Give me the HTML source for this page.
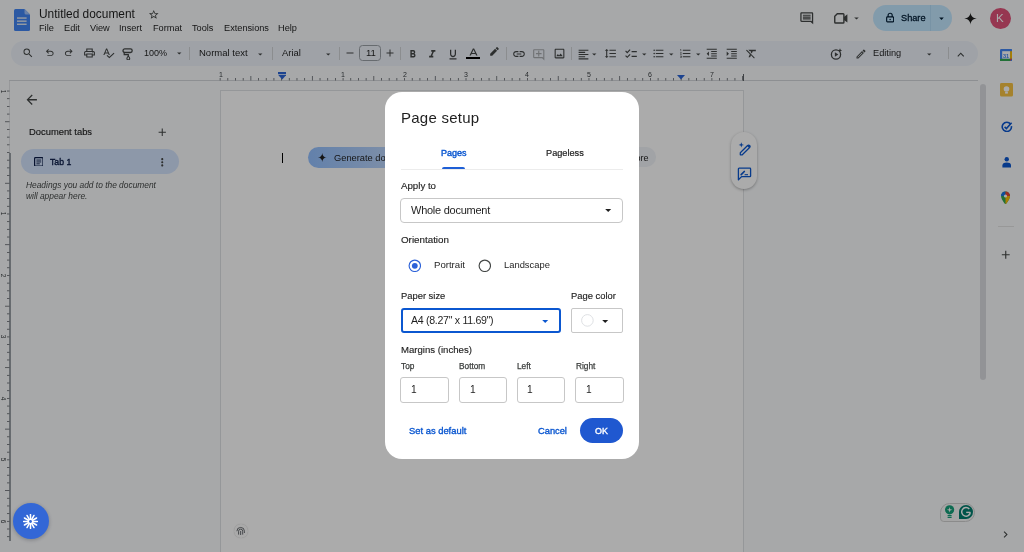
<!DOCTYPE html><html><head><meta charset="utf-8"><style>
html,body{margin:0;padding:0;width:1024px;height:552px;overflow:hidden;background:#f9fbfd;font-family:"Liberation Sans",sans-serif;}
.a{position:absolute;box-sizing:border-box;}
.t{position:absolute;white-space:nowrap;will-change:transform;}
#ov{position:absolute;left:0;top:0;width:1024px;height:552px;background:rgba(0,0,0,0.33);z-index:5}
</style></head><body>
<svg class="a" style="left:14.00px;top:9.00px;width:16.00px;height:22.00px;" viewBox="0 0 16 22"><path d="M0 1.5Q0 0 1.5 0H10.5L16 5.5V20.5Q16 22 14.5 22H1.5Q0 22 0 20.5Z" fill="#4285f4"/><path d="M10.5 0V4Q10.5 5.5 12 5.5H16Z" fill="#a1c2fa"/><rect x="3" y="8.4" width="9.6" height="1.3" fill="#f1f1f1"/><rect x="3" y="11.5" width="9.6" height="1.3" fill="#f1f1f1"/><rect x="3" y="14.6" width="9.6" height="1.3" fill="#f1f1f1"/></svg>
<div class="t" style="left:39.00px;top:4px;font-size:11.9px;line-height:20px;color:#1f1f1f;font-weight:normal;font-style:normal;letter-spacing:0px;">Untitled document</div>
<svg class="a" style="left:147.50px;top:8.50px;width:11.50px;height:11.00px;" viewBox="0 0 24 24" preserveAspectRatio="none"><path fill="#444746" d="M22 9.24l-7.19-.62L12 2 9.19 8.63 2 9.24l5.46 4.73L5.82 21 12 17.27 18.18 21l-1.63-7.03L22 9.24zM12 15.4l-3.76 2.27 1-4.28-3.32-2.88 4.38-.38L12 6.1l1.71 4.04 4.38.38-3.32 2.88 1 4.28L12 15.4z"/></svg>
<div class="t" style="left:39.40px;top:18px;font-size:9.2px;line-height:20px;color:#1f1f1f;font-weight:normal;font-style:normal;letter-spacing:0px;">File</div>
<div class="t" style="left:63.80px;top:18px;font-size:9.2px;line-height:20px;color:#1f1f1f;font-weight:normal;font-style:normal;letter-spacing:0px;">Edit</div>
<div class="t" style="left:89.60px;top:18px;font-size:9.2px;line-height:20px;color:#1f1f1f;font-weight:normal;font-style:normal;letter-spacing:0px;">View</div>
<div class="t" style="left:118.50px;top:18px;font-size:9.2px;line-height:20px;color:#1f1f1f;font-weight:normal;font-style:normal;letter-spacing:0px;">Insert</div>
<div class="t" style="left:152.50px;top:18px;font-size:9.2px;line-height:20px;color:#1f1f1f;font-weight:normal;font-style:normal;letter-spacing:0px;">Format</div>
<div class="t" style="left:192.00px;top:18px;font-size:9.2px;line-height:20px;color:#1f1f1f;font-weight:normal;font-style:normal;letter-spacing:0px;">Tools</div>
<div class="t" style="left:223.60px;top:18px;font-size:9.2px;line-height:20px;color:#1f1f1f;font-weight:normal;font-style:normal;letter-spacing:0px;">Extensions</div>
<div class="t" style="left:277.80px;top:18px;font-size:9.2px;line-height:20px;color:#1f1f1f;font-weight:normal;font-style:normal;letter-spacing:0px;">Help</div>
<svg class="a" style="left:798.50px;top:11.00px;width:15.50px;height:14.50px;" viewBox="0 0 24 24" preserveAspectRatio="none"><path fill="#444746" d="M21.99 4c0-1.1-.89-2-1.99-2H4c-1.1 0-2 .9-2 2v12c0 1.1.9 2 2 2h14l4 4-.01-18zM20 4v13.17L18.83 16H4V4h16zM6 12h12v2H6zm0-3h12v2H6zm0-3h12v2H6z"/></svg>
<svg class="a" style="left:834.00px;top:13.00px;width:14.00px;height:10.80px;" viewBox="0 0 14 10.8"><path d="M3.3 0.75H9.1Q9.9 0.75 9.9 1.55V9.25Q9.9 10.05 9.1 10.05H1.55Q0.75 10.05 0.75 9.25V3.3Z" fill="none" stroke="#444746" stroke-width="1.4"/><path d="M9.9 3.9L13.4 1.3V9.5L9.9 6.9Z" fill="#444746"/></svg>
<svg class="a" style="left:851.00px;top:12.50px;width:11.00px;height:10.50px;" viewBox="0 0 24 24" preserveAspectRatio="none"><path fill="#444746" d="M7 10l5 5 5-5z"/></svg>
<div class="a" style="left:873.00px;top:5.20px;width:79.00px;height:25.70px;background:#c2e7ff;border-radius:13px;"></div>
<div class="a" style="left:930.00px;top:5.20px;width:1.00px;height:25.70px;background:#b3dbf6;"></div>
<svg class="a" style="left:885.50px;top:12.30px;width:8.30px;height:10.50px;" viewBox="0 0 8.3 10.5"><path d="M2.1 4.9V3.3A2.05 2.05 0 0 1 6.2 3.3V4.9" fill="none" stroke="#001d35" stroke-width="1.15"/><rect x="0.65" y="4.9" width="7" height="5" rx="0.8" fill="none" stroke="#001d35" stroke-width="1.15"/><circle cx="4.15" cy="7.4" r="0.75" fill="#001d35"/></svg>
<div class="t" style="left:900.70px;top:8px;font-size:9.2px;line-height:20px;color:#001d35;font-weight:normal;font-style:normal;letter-spacing:0px;-webkit-text-stroke:0.3px #001d35;">Share</div>
<svg class="a" style="left:936.00px;top:12.50px;width:11.00px;height:11.00px;" viewBox="0 0 24 24" preserveAspectRatio="none"><path fill="#001d35" d="M7 10l5 5 5-5z"/></svg>
<svg class="a" style="left:962.50px;top:10.50px;width:15.00px;height:15.00px;" viewBox="0 0 24 24" preserveAspectRatio="none"><path fill="#1f1f1f" d="M12 2C12 7.5 16.5 12 22 12C16.5 12 12 16.5 12 22C12 16.5 7.5 12 2 12C7.5 12 12 7.5 12 2Z"/></svg>
<div class="a" style="left:990.1px;top:8.1px;width:20.8px;height:20.8px;border-radius:50%;background:#e0527a;"></div>
<div class="t" style="left:996.30px;top:8px;font-size:11.5px;line-height:20px;color:#ffffff;font-weight:normal;font-style:normal;letter-spacing:0px;">K</div>
<div class="a" style="left:10.50px;top:40.80px;width:967.10px;height:25.20px;background:#edf2fa;border-radius:12.6px;"></div>
<svg class="a" style="left:22.00px;top:46.80px;width:12.00px;height:12.00px;" viewBox="0 0 24 24" preserveAspectRatio="none"><path fill="#444746" d="M15.5 14h-.79l-.28-.27A6.471 6.471 0 0 0 16 9.5 6.5 6.5 0 1 0 9.5 16c1.61 0 3.09-.59 4.23-1.57l.27.28v.79l5 4.99L20.49 19l-4.99-5zm-6 0C7.01 14 5 11.99 5 9.5S7.01 5 9.5 5 14 7.01 14 9.5 11.99 14 9.5 14z"/></svg>
<svg class="a" style="left:43.50px;top:47.30px;width:11.50px;height:11.50px;" viewBox="0 0 24 24" preserveAspectRatio="none"><path fill="#444746" d="M7 19v-2h7.1q1.575 0 2.738-1T18 13.5 16.838 11 14.1 10H7.8l2.6 2.6L9 14 4 9l5-5 1.4 1.4L7.8 8h6.3q2.425 0 4.163 1.575T20 13.5t-1.737 3.925T14.1 19Z"/></svg>
<svg class="a" style="left:62.50px;top:47.30px;width:11.50px;height:11.50px;" viewBox="0 0 24 24" preserveAspectRatio="none"><path fill="#444746" d="M9.9 19q-2.425 0-4.162-1.575T4 13.5t1.738-3.925T9.9 8h6.3l-2.6-2.6L15 4l5 5-5 5-1.4-1.4 2.6-2.6H9.9q-1.575 0-2.737 1T6 13.5 7.163 16 9.9 17H17v2Z"/></svg>
<svg class="a" style="left:82.50px;top:47.30px;width:13.00px;height:12.00px;" viewBox="0 0 24 24" preserveAspectRatio="none"><path fill="#444746" d="M16 8V5H8v3H6V3h12v5ZM4 10h16H6Zm14 2.5q.425 0 .712-.288.288-.287.288-.712t-.288-.713Q18.425 10.5 18 10.5t-.712.287Q17 11.075 17 11.5t.288.712q.287.288.712.288ZM16 19v-4H8v4Zm2 2H6v-4H2v-6q0-1.275.875-2.137Q3.75 8 5 8h14q1.275 0 2.138.863Q22 9.725 22 11v6h-4Zm2-6v-4q0-.425-.288-.713Q19.425 10 19 10H5q-.425 0-.713.287Q4 10.575 4 11v4h2v-2h12v2Z"/></svg>
<svg class="a" style="left:102.00px;top:47.30px;width:13.00px;height:12.00px;" viewBox="0 0 24 24" preserveAspectRatio="none"><path fill="#444746" d="M12.45 16h2.09L9.43 3H7.57L2.46 16h2.09l1.12-3h5.64l1.14 3zm-6.02-5L8.5 5.48 10.57 11H6.43zm15.16.59l-8.09 8.09L9.83 16l-1.41 1.41 5.09 5.09L23 13l-1.41-1.41z"/></svg>
<svg class="a" style="left:122.00px;top:47.50px;width:11.50px;height:12.00px;" viewBox="0 0 11.5 12"><rect x="1" y="0.9" width="9.2" height="3.6" rx="1.8" fill="none" stroke="#444746" stroke-width="1.3"/><path d="M2.2 4.6V6.6H6.3V8.2" fill="none" stroke="#444746" stroke-width="1.2"/><path d="M6.3 8.2Q4.9 9.6 4.9 10.4A1.4 1.4 0 0 0 7.7 10.4Q7.7 9.6 6.3 8.2Z" fill="none" stroke="#444746" stroke-width="1.1"/></svg>
<div class="t" style="left:144.00px;top:43px;font-size:9.0px;line-height:20px;color:#1f1f1f;font-weight:normal;font-style:normal;letter-spacing:0px;">100%</div>
<svg class="a" style="left:174.00px;top:48.30px;width:10.50px;height:10.50px;" viewBox="0 0 24 24" preserveAspectRatio="none"><path fill="#444746" d="M7 10l5 5 5-5z"/></svg>
<div class="a" style="left:189.00px;top:47.00px;width:1.00px;height:12.50px;background:#d0d3d6;"></div>
<div class="t" style="left:199.20px;top:43px;font-size:9.5px;line-height:20px;color:#1f1f1f;font-weight:normal;font-style:normal;letter-spacing:0px;">Normal text</div>
<svg class="a" style="left:255.00px;top:48.80px;width:10.50px;height:10.50px;" viewBox="0 0 24 24" preserveAspectRatio="none"><path fill="#444746" d="M7 10l5 5 5-5z"/></svg>
<div class="a" style="left:272.20px;top:47.00px;width:1.00px;height:12.50px;background:#d0d3d6;"></div>
<div class="t" style="left:281.90px;top:43px;font-size:9.45px;line-height:20px;color:#1f1f1f;font-weight:normal;font-style:normal;letter-spacing:0px;">Arial</div>
<svg class="a" style="left:322.50px;top:48.80px;width:10.50px;height:10.50px;" viewBox="0 0 24 24" preserveAspectRatio="none"><path fill="#444746" d="M7 10l5 5 5-5z"/></svg>
<div class="a" style="left:339.20px;top:47.00px;width:1.00px;height:12.50px;background:#d0d3d6;"></div>
<svg class="a" style="left:343.50px;top:46.60px;width:12.00px;height:12.00px;" viewBox="0 0 24 24" preserveAspectRatio="none"><path fill="#444746" d="M5 11h14v2H5z"/></svg>
<div class="a" style="left:359.20px;top:45.20px;width:21.50px;height:15.50px;border:1px solid #9aa0a6;border-radius:3.5px;"></div>
<div class="t" style="left:365.60px;top:43px;font-size:9.6px;line-height:20px;color:#1f1f1f;font-weight:normal;font-style:normal;letter-spacing:0px;">11</div>
<svg class="a" style="left:383.50px;top:46.60px;width:12.00px;height:12.00px;" viewBox="0 0 24 24" preserveAspectRatio="none"><path fill="#444746" d="M19 13h-6v6h-2v-6H5v-2h6V5h2v6h6v2z"/></svg>
<div class="a" style="left:400.20px;top:47.00px;width:1.00px;height:12.50px;background:#d0d3d6;"></div>
<svg class="a" style="left:407.00px;top:48.30px;width:11.50px;height:12.50px;" viewBox="0 0 24 24" preserveAspectRatio="none"><path fill="#444746" d="M15.6 10.79c.97-.67 1.65-1.77 1.65-2.79 0-2.26-1.75-4-4-4H7v14h7.04c2.09 0 3.71-1.7 3.71-3.79 0-1.52-.86-2.82-2.15-3.42zM10 6.5h3c.83 0 1.5.67 1.5 1.5s-.67 1.5-1.5 1.5h-3v-3zm3.5 9H10v-3h3.5c.83 0 1.5.67 1.5 1.5s-.67 1.5-1.5 1.5z"/></svg>
<svg class="a" style="left:425.50px;top:48.30px;width:12.50px;height:12.50px;" viewBox="0 0 24 24" preserveAspectRatio="none"><path fill="#444746" d="M10 4v3h2.21l-3.42 8H6v3h8v-3h-2.21l3.42-8H18V4z"/></svg>
<svg class="a" style="left:446.50px;top:47.80px;width:12.00px;height:13.00px;" viewBox="0 0 24 24" preserveAspectRatio="none"><path fill="#444746" d="M12 17c3.31 0 6-2.69 6-6V3h-2.5v8c0 1.93-1.57 3.5-3.5 3.5S8.5 12.93 8.5 11V3H6v8c0 3.31 2.69 6 6 6zm-7 2v2h14v-2H5z"/></svg>
<svg class="a" style="left:465.50px;top:47.30px;width:15.00px;height:12.00px;" viewBox="0 0 24 24" preserveAspectRatio="none"><path fill="#444746" d="M11 3L5.5 17h2.25l1.12-3h6.25l1.12 3h2.25L13 3h-2zm-1.38 9L12 5.67 14.38 12H9.62z"/></svg>
<div class="a" style="left:465.80px;top:57.00px;width:14.30px;height:2.20px;background:#000;"></div>
<svg class="a" style="left:488.00px;top:46.30px;width:13.00px;height:13.00px;" viewBox="0 0 24 24" preserveAspectRatio="none"><path fill="#444746" d="M13.06 5.19l3.75 3.75L7.75 18H4v-3.75l9.06-9.06zm4.82 2.68-3.75-3.75 1.83-1.83c.39-.39 1.02-.39 1.41 0l2.34 2.34c.39.39.39 1.02 0 1.41l-1.83 1.83z"/></svg>
<div class="a" style="left:506.30px;top:47.00px;width:1.00px;height:12.50px;background:#d0d3d6;"></div>
<svg class="a" style="left:512.00px;top:47.10px;width:14.00px;height:14.00px;" viewBox="0 0 24 24" preserveAspectRatio="none"><path fill="#444746" d="M3.9 12c0-1.71 1.39-3.1 3.1-3.1h4V7H7c-2.76 0-5 2.24-5 5s2.24 5 5 5h4v-1.9H7c-1.71 0-3.1-1.39-3.1-3.1zM8 13h8v-2H8v2zm9-6h-4v1.9h4c1.71 0 3.1 1.39 3.1 3.1s-1.39 3.1-3.1 3.1h-4V17h4c2.76 0 5-2.24 5-5s-2.24-5-5-5z"/></svg>
<svg class="a" style="left:532.00px;top:47.80px;width:13.50px;height:13.50px;" viewBox="0 0 24 24" preserveAspectRatio="none"><path fill="#a8abae" d="M22 4c0-1.1-.9-2-2-2H4c-1.1 0-1.99.9-1.99 2L2 16c0 1.1.9 2 2 2h14l4 4-.01-18zM20 17.17 18.83 16H4V4h16v13.17zM13 5h-2v4H7v2h4v4h2v-4h4V9h-4z"/></svg>
<svg class="a" style="left:552.50px;top:46.60px;width:13.00px;height:13.00px;" viewBox="0 0 24 24" preserveAspectRatio="none"><path fill="#444746" d="M19 5v14H5V5h14m0-2H5c-1.1 0-2 .9-2 2v14c0 1.1.9 2 2 2h14c1.1 0 2-.9 2-2V5c0-1.1-.9-2-2-2zm-4.86 8.86-3 3.87L9 13.14 6 17h12l-3.86-5.14z"/></svg>
<div class="a" style="left:571.00px;top:47.00px;width:1.00px;height:12.50px;background:#d0d3d6;"></div>
<svg class="a" style="left:576.50px;top:47.80px;width:13.00px;height:13.00px;" viewBox="0 0 24 24" preserveAspectRatio="none"><path fill="#444746" d="M15 15H3v2h12v-2zm0-8H3v2h12V7zM3 13h18v-2H3v2zm0 8h18v-2H3v2zM3 3v2h18V3H3z"/></svg>
<svg class="a" style="left:589.00px;top:48.80px;width:10.50px;height:10.50px;" viewBox="0 0 24 24" preserveAspectRatio="none"><path fill="#444746" d="M7 10l5 5 5-5z"/></svg>
<svg class="a" style="left:603.50px;top:47.30px;width:13.00px;height:13.00px;" viewBox="0 0 24 24" preserveAspectRatio="none"><path fill="#444746" d="M6 7h2.5L5 3.5 1.5 7H4v10H1.5L5 20.5 8.5 17H6V7zm4-2v2h12V5H10zm0 14h12v-2H10v2zm0-6h12v-2H10v2z"/></svg>
<svg class="a" style="left:624.00px;top:47.30px;width:14.00px;height:14.00px;" viewBox="0 0 24 24" preserveAspectRatio="none"><path fill="#444746" d="M22 7h-9v2h9V7zm0 8h-9v2h9v-2zM5.54 11 2 7.46l1.41-1.41 2.12 2.12 4.24-4.24 1.41 1.41L5.54 11zm0 8L2 15.46l1.41-1.41 2.12 2.12 4.24-4.24 1.41 1.41L5.54 19z"/></svg>
<svg class="a" style="left:638.50px;top:48.80px;width:10.50px;height:10.50px;" viewBox="0 0 24 24" preserveAspectRatio="none"><path fill="#444746" d="M7 10l5 5 5-5z"/></svg>
<svg class="a" style="left:652.00px;top:47.30px;width:13.00px;height:13.00px;" viewBox="0 0 24 24" preserveAspectRatio="none"><path fill="#444746" d="M4 10.5c-.83 0-1.5.67-1.5 1.5s.67 1.5 1.5 1.5 1.5-.67 1.5-1.5-.67-1.5-1.5-1.5zm0-6c-.83 0-1.5.67-1.5 1.5S3.17 7.5 4 7.5 5.5 6.83 5.5 6 4.83 4.5 4 4.5zm0 12c-.83 0-1.5.68-1.5 1.5s.68 1.5 1.5 1.5 1.5-.68 1.5-1.5-.67-1.5-1.5-1.5zM7 19h14v-2H7v2zm0-6h14v-2H7v2zm0-8v2h14V5H7z"/></svg>
<svg class="a" style="left:666.00px;top:48.80px;width:10.50px;height:10.50px;" viewBox="0 0 24 24" preserveAspectRatio="none"><path fill="#444746" d="M7 10l5 5 5-5z"/></svg>
<svg class="a" style="left:678.50px;top:47.30px;width:13.00px;height:13.00px;" viewBox="0 0 24 24" preserveAspectRatio="none"><path fill="#444746" d="M2 17h2v.5H3v1h1v.5H2v1h3v-4H2v1zm1-9h1V4H2v1h1v3zm-1 3h1.8L2 13.1v.9h3v-1H3.2L5 10.9V10H2v1zm5-6v2h14V5H7zm0 14h14v-2H7v2zm0-6h14v-2H7v2z"/></svg>
<svg class="a" style="left:692.50px;top:48.80px;width:10.50px;height:10.50px;" viewBox="0 0 24 24" preserveAspectRatio="none"><path fill="#444746" d="M7 10l5 5 5-5z"/></svg>
<svg class="a" style="left:705.00px;top:47.30px;width:13.50px;height:13.50px;" viewBox="0 0 24 24" preserveAspectRatio="none"><path fill="#444746" d="M11 17h10v-2H11v2zm-8-5 4 4V8l-4 4zm0 9h18v-2H3v2zM3 3v2h18V3H3zm8 6h10V7H11v2zm0 4h10v-2H11v2z"/></svg>
<svg class="a" style="left:725.00px;top:47.30px;width:13.50px;height:13.50px;" viewBox="0 0 24 24" preserveAspectRatio="none"><path fill="#444746" d="M3 21h18v-2H3v2zM3 8v8l4-4-4-4zm8 9h10v-2H11v2zM3 3v2h18V3H3zm8 6h10V7H11v2zm0 4h10v-2H11v2z"/></svg>
<svg class="a" style="left:745.00px;top:47.30px;width:13.00px;height:13.00px;" viewBox="0 0 24 24" preserveAspectRatio="none"><path fill="#444746" d="M3.27 5 2 6.27l6.97 6.97L6.5 19h3l1.57-3.66L16.73 21 18 19.73 3.55 5.27 3.27 5zM6 5v.18L8.82 8h2.4l-.72 1.68 2.1 2.1L14.21 8H20V5H6z"/></svg>
<svg class="a" style="left:829.50px;top:47.50px;width:13.00px;height:12.00px;" viewBox="0 0 13 12"><circle cx="6" cy="6.5" r="4.6" fill="none" stroke="#444746" stroke-width="1.3"/><path d="M4.9 4.3V8.7L8.3 6.5Z" fill="#444746"/><path d="M10 0.3L10.6 1.8L12.1 2.4L10.6 3L10 4.5L9.4 3L7.9 2.4L9.4 1.8Z" fill="#444746"/></svg>
<svg class="a" style="left:854.50px;top:47.80px;width:12.00px;height:12.00px;" viewBox="0 0 24 24" preserveAspectRatio="none"><path fill="#444746" d="M14.06 9.02l.92.92L5.92 19H5v-.92l9.06-9.06M17.66 3c-.25 0-.51.1-.7.29l-1.83 1.83 3.75 3.75 1.83-1.83c.39-.39.39-1.02 0-1.41l-2.34-2.34c-.2-.2-.45-.29-.71-.29zm-3.6 3.19L3 17.25V21h3.75L17.81 9.94l-3.75-3.75z"/></svg>
<div class="t" style="left:872.90px;top:43px;font-size:9.22px;line-height:20px;color:#1f1f1f;font-weight:normal;font-style:normal;letter-spacing:0px;">Editing</div>
<svg class="a" style="left:923.50px;top:48.80px;width:10.50px;height:10.50px;" viewBox="0 0 24 24" preserveAspectRatio="none"><path fill="#444746" d="M7 10l5 5 5-5z"/></svg>
<div class="a" style="left:948.30px;top:47.00px;width:1.00px;height:12.00px;background:#d0d3d6;"></div>
<svg class="a" style="left:953.50px;top:47.80px;width:13.50px;height:13.50px;" viewBox="0 0 24 24" preserveAspectRatio="none"><path fill="#444746" d="M12 8l-6 6 1.41 1.41L12 10.83l4.59 4.58L18 14z"/></svg>
<div class="a" style="left:9.40px;top:80.00px;width:969.10px;height:1.00px;background:#d3d6da;"></div>
<div class="a" style="left:9.00px;top:80.50px;width:1.00px;height:460.00px;background:#e1e3e6;"></div>
<div class="a" style="left:9.00px;top:152.50px;width:1.60px;height:388.00px;background:#9aa0a6;"></div>
<svg class="a" style="left:0.00px;top:0.00px;width:1024.00px;height:90.00px;" viewBox="0 0 1024 90"><rect x="219.73" y="78.00" width="0.8" height="2.5" fill="#5f6368"/><rect x="227.41" y="78.00" width="0.8" height="2.5" fill="#5f6368"/><rect x="235.10" y="78.00" width="0.8" height="2.5" fill="#5f6368"/><rect x="242.78" y="78.00" width="0.8" height="2.5" fill="#5f6368"/><rect x="250.47" y="76.00" width="0.8" height="4.5" fill="#5f6368"/><rect x="258.15" y="78.00" width="0.8" height="2.5" fill="#5f6368"/><rect x="265.83" y="78.00" width="0.8" height="2.5" fill="#5f6368"/><rect x="273.52" y="78.00" width="0.8" height="2.5" fill="#5f6368"/><rect x="281.20" y="78.00" width="0.8" height="2.5" fill="#5f6368"/><rect x="288.88" y="78.00" width="0.8" height="2.5" fill="#5f6368"/><rect x="296.57" y="78.00" width="0.8" height="2.5" fill="#5f6368"/><rect x="304.25" y="78.00" width="0.8" height="2.5" fill="#5f6368"/><rect x="311.94" y="76.00" width="0.8" height="4.5" fill="#5f6368"/><rect x="319.62" y="78.00" width="0.8" height="2.5" fill="#5f6368"/><rect x="327.30" y="78.00" width="0.8" height="2.5" fill="#5f6368"/><rect x="334.99" y="78.00" width="0.8" height="2.5" fill="#5f6368"/><rect x="342.67" y="78.00" width="0.8" height="2.5" fill="#5f6368"/><rect x="350.35" y="78.00" width="0.8" height="2.5" fill="#5f6368"/><rect x="358.04" y="78.00" width="0.8" height="2.5" fill="#5f6368"/><rect x="365.72" y="78.00" width="0.8" height="2.5" fill="#5f6368"/><rect x="373.41" y="76.00" width="0.8" height="4.5" fill="#5f6368"/><rect x="381.09" y="78.00" width="0.8" height="2.5" fill="#5f6368"/><rect x="388.77" y="78.00" width="0.8" height="2.5" fill="#5f6368"/><rect x="396.46" y="78.00" width="0.8" height="2.5" fill="#5f6368"/><rect x="404.14" y="78.00" width="0.8" height="2.5" fill="#5f6368"/><rect x="411.82" y="78.00" width="0.8" height="2.5" fill="#5f6368"/><rect x="419.51" y="78.00" width="0.8" height="2.5" fill="#5f6368"/><rect x="427.19" y="78.00" width="0.8" height="2.5" fill="#5f6368"/><rect x="434.88" y="76.00" width="0.8" height="4.5" fill="#5f6368"/><rect x="442.56" y="78.00" width="0.8" height="2.5" fill="#5f6368"/><rect x="450.24" y="78.00" width="0.8" height="2.5" fill="#5f6368"/><rect x="457.93" y="78.00" width="0.8" height="2.5" fill="#5f6368"/><rect x="465.61" y="78.00" width="0.8" height="2.5" fill="#5f6368"/><rect x="473.29" y="78.00" width="0.8" height="2.5" fill="#5f6368"/><rect x="480.98" y="78.00" width="0.8" height="2.5" fill="#5f6368"/><rect x="488.66" y="78.00" width="0.8" height="2.5" fill="#5f6368"/><rect x="496.35" y="76.00" width="0.8" height="4.5" fill="#5f6368"/><rect x="504.03" y="78.00" width="0.8" height="2.5" fill="#5f6368"/><rect x="511.71" y="78.00" width="0.8" height="2.5" fill="#5f6368"/><rect x="519.40" y="78.00" width="0.8" height="2.5" fill="#5f6368"/><rect x="527.08" y="78.00" width="0.8" height="2.5" fill="#5f6368"/><rect x="534.76" y="78.00" width="0.8" height="2.5" fill="#5f6368"/><rect x="542.45" y="78.00" width="0.8" height="2.5" fill="#5f6368"/><rect x="550.13" y="78.00" width="0.8" height="2.5" fill="#5f6368"/><rect x="557.82" y="76.00" width="0.8" height="4.5" fill="#5f6368"/><rect x="565.50" y="78.00" width="0.8" height="2.5" fill="#5f6368"/><rect x="573.18" y="78.00" width="0.8" height="2.5" fill="#5f6368"/><rect x="580.87" y="78.00" width="0.8" height="2.5" fill="#5f6368"/><rect x="588.55" y="78.00" width="0.8" height="2.5" fill="#5f6368"/><rect x="596.23" y="78.00" width="0.8" height="2.5" fill="#5f6368"/><rect x="603.92" y="78.00" width="0.8" height="2.5" fill="#5f6368"/><rect x="611.60" y="78.00" width="0.8" height="2.5" fill="#5f6368"/><rect x="619.28" y="76.00" width="0.8" height="4.5" fill="#5f6368"/><rect x="626.97" y="78.00" width="0.8" height="2.5" fill="#5f6368"/><rect x="634.65" y="78.00" width="0.8" height="2.5" fill="#5f6368"/><rect x="642.34" y="78.00" width="0.8" height="2.5" fill="#5f6368"/><rect x="650.02" y="78.00" width="0.8" height="2.5" fill="#5f6368"/><rect x="657.70" y="78.00" width="0.8" height="2.5" fill="#5f6368"/><rect x="665.39" y="78.00" width="0.8" height="2.5" fill="#5f6368"/><rect x="673.07" y="78.00" width="0.8" height="2.5" fill="#5f6368"/><rect x="680.75" y="76.00" width="0.8" height="4.5" fill="#5f6368"/><rect x="688.44" y="78.00" width="0.8" height="2.5" fill="#5f6368"/><rect x="696.12" y="78.00" width="0.8" height="2.5" fill="#5f6368"/><rect x="703.81" y="78.00" width="0.8" height="2.5" fill="#5f6368"/><rect x="711.49" y="78.00" width="0.8" height="2.5" fill="#5f6368"/><rect x="719.17" y="78.00" width="0.8" height="2.5" fill="#5f6368"/><rect x="726.86" y="78.00" width="0.8" height="2.5" fill="#5f6368"/><rect x="734.54" y="78.00" width="0.8" height="2.5" fill="#5f6368"/><rect x="742.23" y="76.00" width="0.8" height="4.5" fill="#5f6368"/></svg>
<div class="t" style="left:218.50px;top:65px;font-size:7px;line-height:20px;color:#3c4043;font-weight:normal;font-style:normal;letter-spacing:0px;">1</div>
<div class="t" style="left:341.07px;top:65px;font-size:7px;line-height:20px;color:#3c4043;font-weight:normal;font-style:normal;letter-spacing:0px;">1</div>
<div class="t" style="left:402.54px;top:65px;font-size:7px;line-height:20px;color:#3c4043;font-weight:normal;font-style:normal;letter-spacing:0px;">2</div>
<div class="t" style="left:464.01px;top:65px;font-size:7px;line-height:20px;color:#3c4043;font-weight:normal;font-style:normal;letter-spacing:0px;">3</div>
<div class="t" style="left:525.48px;top:65px;font-size:7px;line-height:20px;color:#3c4043;font-weight:normal;font-style:normal;letter-spacing:0px;">4</div>
<div class="t" style="left:586.95px;top:65px;font-size:7px;line-height:20px;color:#3c4043;font-weight:normal;font-style:normal;letter-spacing:0px;">5</div>
<div class="t" style="left:648.42px;top:65px;font-size:7px;line-height:20px;color:#3c4043;font-weight:normal;font-style:normal;letter-spacing:0px;">6</div>
<div class="t" style="left:709.89px;top:65px;font-size:7px;line-height:20px;color:#3c4043;font-weight:normal;font-style:normal;letter-spacing:0px;">7</div>
<div class="a" style="left:743.00px;top:74.00px;width:0.80px;height:6.50px;background:#5f6368;"></div>
<svg class="a" style="left:277.50px;top:72.00px;width:8.50px;height:7.50px;" viewBox="0 0 8.5 7.5"><rect x="0" y="0" width="8.5" height="2" fill="#2a64d6"/><path d="M0 2.7H8.5L4.25 7.5Z" fill="#2a64d6"/></svg>
<svg class="a" style="left:676.80px;top:75.00px;width:8.00px;height:4.50px;" viewBox="0 0 8 4.5"><path d="M0 0H8L4 4.5Z" fill="#2a64d6"/></svg>
<svg class="a" style="left:0.00px;top:0.00px;width:12.00px;height:552.00px;" viewBox="0 0 12 552"><rect x="7.00" y="90.63" width="2.5" height="0.8" fill="#5f6368"/><rect x="7.00" y="98.31" width="2.5" height="0.8" fill="#5f6368"/><rect x="7.00" y="106.00" width="2.5" height="0.8" fill="#5f6368"/><rect x="7.00" y="113.68" width="2.5" height="0.8" fill="#5f6368"/><rect x="5.00" y="121.36" width="4.5" height="0.8" fill="#5f6368"/><rect x="7.00" y="129.05" width="2.5" height="0.8" fill="#5f6368"/><rect x="7.00" y="136.73" width="2.5" height="0.8" fill="#5f6368"/><rect x="7.00" y="144.42" width="2.5" height="0.8" fill="#5f6368"/><rect x="7.00" y="152.10" width="2.5" height="0.8" fill="#5f6368"/><rect x="7.00" y="159.78" width="2.5" height="0.8" fill="#5f6368"/><rect x="7.00" y="167.47" width="2.5" height="0.8" fill="#5f6368"/><rect x="7.00" y="175.15" width="2.5" height="0.8" fill="#5f6368"/><rect x="5.00" y="182.84" width="4.5" height="0.8" fill="#5f6368"/><rect x="7.00" y="190.52" width="2.5" height="0.8" fill="#5f6368"/><rect x="7.00" y="198.20" width="2.5" height="0.8" fill="#5f6368"/><rect x="7.00" y="205.89" width="2.5" height="0.8" fill="#5f6368"/><rect x="7.00" y="213.57" width="2.5" height="0.8" fill="#5f6368"/><rect x="7.00" y="221.25" width="2.5" height="0.8" fill="#5f6368"/><rect x="7.00" y="228.94" width="2.5" height="0.8" fill="#5f6368"/><rect x="7.00" y="236.62" width="2.5" height="0.8" fill="#5f6368"/><rect x="5.00" y="244.30" width="4.5" height="0.8" fill="#5f6368"/><rect x="7.00" y="251.99" width="2.5" height="0.8" fill="#5f6368"/><rect x="7.00" y="259.67" width="2.5" height="0.8" fill="#5f6368"/><rect x="7.00" y="267.36" width="2.5" height="0.8" fill="#5f6368"/><rect x="7.00" y="275.04" width="2.5" height="0.8" fill="#5f6368"/><rect x="7.00" y="282.72" width="2.5" height="0.8" fill="#5f6368"/><rect x="7.00" y="290.41" width="2.5" height="0.8" fill="#5f6368"/><rect x="7.00" y="298.09" width="2.5" height="0.8" fill="#5f6368"/><rect x="5.00" y="305.78" width="4.5" height="0.8" fill="#5f6368"/><rect x="7.00" y="313.46" width="2.5" height="0.8" fill="#5f6368"/><rect x="7.00" y="321.14" width="2.5" height="0.8" fill="#5f6368"/><rect x="7.00" y="328.83" width="2.5" height="0.8" fill="#5f6368"/><rect x="7.00" y="336.51" width="2.5" height="0.8" fill="#5f6368"/><rect x="7.00" y="344.19" width="2.5" height="0.8" fill="#5f6368"/><rect x="7.00" y="351.88" width="2.5" height="0.8" fill="#5f6368"/><rect x="7.00" y="359.56" width="2.5" height="0.8" fill="#5f6368"/><rect x="5.00" y="367.25" width="4.5" height="0.8" fill="#5f6368"/><rect x="7.00" y="374.93" width="2.5" height="0.8" fill="#5f6368"/><rect x="7.00" y="382.61" width="2.5" height="0.8" fill="#5f6368"/><rect x="7.00" y="390.30" width="2.5" height="0.8" fill="#5f6368"/><rect x="7.00" y="397.98" width="2.5" height="0.8" fill="#5f6368"/><rect x="7.00" y="405.66" width="2.5" height="0.8" fill="#5f6368"/><rect x="7.00" y="413.35" width="2.5" height="0.8" fill="#5f6368"/><rect x="7.00" y="421.03" width="2.5" height="0.8" fill="#5f6368"/><rect x="5.00" y="428.72" width="4.5" height="0.8" fill="#5f6368"/><rect x="7.00" y="436.40" width="2.5" height="0.8" fill="#5f6368"/><rect x="7.00" y="444.08" width="2.5" height="0.8" fill="#5f6368"/><rect x="7.00" y="451.77" width="2.5" height="0.8" fill="#5f6368"/><rect x="7.00" y="459.45" width="2.5" height="0.8" fill="#5f6368"/><rect x="7.00" y="467.13" width="2.5" height="0.8" fill="#5f6368"/><rect x="7.00" y="474.82" width="2.5" height="0.8" fill="#5f6368"/><rect x="7.00" y="482.50" width="2.5" height="0.8" fill="#5f6368"/><rect x="5.00" y="490.19" width="4.5" height="0.8" fill="#5f6368"/><rect x="7.00" y="497.87" width="2.5" height="0.8" fill="#5f6368"/><rect x="7.00" y="505.55" width="2.5" height="0.8" fill="#5f6368"/><rect x="7.00" y="513.24" width="2.5" height="0.8" fill="#5f6368"/><rect x="7.00" y="520.92" width="2.5" height="0.8" fill="#5f6368"/><rect x="7.00" y="528.60" width="2.5" height="0.8" fill="#5f6368"/><rect x="7.00" y="536.29" width="2.5" height="0.8" fill="#5f6368"/></svg>
<div class="t" style="left:0px;top:88.10px;width:7px;height:7px;font-size:6.5px;line-height:7px;color:#3c4043;transform:rotate(90deg);text-align:center">1</div>
<div class="t" style="left:0px;top:210.47px;width:7px;height:7px;font-size:6.5px;line-height:7px;color:#3c4043;transform:rotate(90deg);text-align:center">1</div>
<div class="t" style="left:0px;top:271.94px;width:7px;height:7px;font-size:6.5px;line-height:7px;color:#3c4043;transform:rotate(90deg);text-align:center">2</div>
<div class="t" style="left:0px;top:333.41px;width:7px;height:7px;font-size:6.5px;line-height:7px;color:#3c4043;transform:rotate(90deg);text-align:center">3</div>
<div class="t" style="left:0px;top:394.88px;width:7px;height:7px;font-size:6.5px;line-height:7px;color:#3c4043;transform:rotate(90deg);text-align:center">4</div>
<div class="t" style="left:0px;top:456.35px;width:7px;height:7px;font-size:6.5px;line-height:7px;color:#3c4043;transform:rotate(90deg);text-align:center">5</div>
<div class="t" style="left:0px;top:517.82px;width:7px;height:7px;font-size:6.5px;line-height:7px;color:#3c4043;transform:rotate(90deg);text-align:center">6</div>
<svg class="a" style="left:24.00px;top:91.50px;width:15.50px;height:15.50px;" viewBox="0 0 24 24" preserveAspectRatio="none"><path fill="#444746" d="M20 11H7.83l5.59-5.59L12 4 4 12l8 8 1.41-1.41L7.83 13H20v-2z"/></svg>
<div class="t" style="left:28.50px;top:122px;font-size:9.4px;line-height:20px;color:#1f1f1f;font-weight:normal;font-style:normal;letter-spacing:0px;-webkit-text-stroke:0.15px #1f1f1f;">Document tabs</div>
<svg class="a" style="left:156.00px;top:126.00px;width:12.50px;height:12.50px;" viewBox="0 0 24 24" preserveAspectRatio="none"><path fill="#444746" d="M19 13h-6v6h-2v-6H5v-2h6V5h2v6h6v2z"/></svg>
<div class="a" style="left:20.90px;top:149.00px;width:158.40px;height:25.40px;background:#d3e3fd;border-radius:13px;"></div>
<svg class="a" style="left:33.50px;top:156.60px;width:9.60px;height:9.80px;" viewBox="0 0 9.6 9.8"><rect x="0.6" y="0.6" width="8.4" height="8.6" rx="0.8" fill="none" stroke="#0b1c47" stroke-width="1.2"/><rect x="2.4" y="2.6" width="4.8" height="0.9" fill="#0b1c47"/><rect x="2.4" y="4.5" width="4.8" height="0.9" fill="#0b1c47"/><rect x="2.4" y="6.4" width="3.4" height="0.9" fill="#0b1c47"/></svg>
<div class="t" style="left:50.40px;top:152px;font-size:8.7px;line-height:20px;color:#0b1c47;font-weight:normal;font-style:normal;letter-spacing:0px;-webkit-text-stroke:0.35px #0b1c47;">Tab 1</div>
<svg class="a" style="left:156.00px;top:155.50px;width:12.50px;height:12.50px;" viewBox="0 0 24 24" preserveAspectRatio="none"><path fill="#444746" d="M12 8c1.1 0 2-.9 2-2s-.9-2-2-2-2 .9-2 2 .9 2 2 2zm0 2c-1.1 0-2 .9-2 2s.9 2 2 2 2-.9 2-2-.9-2-2-2zm0 6c-1.1 0-2 .9-2 2s.9 2 2 2 2-.9 2-2-.9-2-2-2z"/></svg>
<div class="t" style="left:25.80px;top:175px;font-size:8.4px;line-height:20px;color:#444746;font-weight:normal;font-style:italic;letter-spacing:0px;">Headings you add to the document</div>
<div class="t" style="left:25.80px;top:186px;font-size:8.4px;line-height:20px;color:#444746;font-weight:normal;font-style:italic;letter-spacing:0px;">will appear here.</div>
<div class="a" style="left:220.00px;top:90.00px;width:524.00px;height:470.00px;background:#fff;border:1px solid #dfe1e4;"></div>
<div class="a" style="left:282.00px;top:152.80px;width:1.20px;height:10.40px;background:#000;"></div>
<div class="a" style="left:308.00px;top:147.00px;width:112.00px;height:20.80px;background:linear-gradient(90deg,#93c0ff,#cadcf9);border-radius:10.5px;"></div>
<svg class="a" style="left:316.50px;top:152.00px;width:10.50px;height:11.00px;" viewBox="0 0 24 24" preserveAspectRatio="none"><path fill="#1f1f1f" d="M12 2C12 7.5 16.5 12 22 12C16.5 12 12 16.5 12 22C12 16.5 7.5 12 2 12C7.5 12 12 7.5 12 2Z"/></svg>
<div class="t" style="left:333.90px;top:148px;font-size:9.3px;line-height:20px;color:#1f1f1f;font-weight:normal;font-style:normal;letter-spacing:0px;">Generate document</div>
<div class="a" style="left:560.00px;top:147.30px;width:95.90px;height:19.90px;background:#f0f3f8;border-radius:10px;"></div>
<div class="t" style="left:627.50px;top:148px;font-size:9.0px;line-height:20px;color:#1f1f1f;font-weight:normal;font-style:normal;letter-spacing:0px;">More</div>
<div class="a" style="left:731.00px;top:132.00px;width:25.50px;height:56.60px;background:#fff;border-radius:13px;box-shadow:0 1px 3px rgba(0,0,0,0.3);"></div>
<svg class="a" style="left:737.50px;top:141.50px;width:14.00px;height:14.00px;" viewBox="0 0 14 14"><path d="M2.3 10.8L9.6 3.5Q10.6 2.5 11.6 3.5Q12.6 4.5 11.6 5.5L4.3 12.8H2.3Z" fill="none" stroke="#0b57d0" stroke-width="1.25" stroke-linejoin="round"/><path d="M9.2 3.9L9.9 3.2Q10.6 2.5 11.6 3.5Q12.6 4.5 11.9 5.2L11.2 5.9Z" fill="#0b57d0"/><path d="M3.3 0.2L4 2.2L6 2.9L4 3.6L3.3 5.6L2.6 3.6L0.6 2.9L2.6 2.2Z" fill="#0b57d0"/></svg>
<svg class="a" style="left:737.00px;top:166.50px;width:15.00px;height:14.00px;" viewBox="0 0 15 14"><path d="M1.4 12.8V1.9Q1.4 1.2 2.1 1.2H12.9Q13.6 1.2 13.6 1.9V8.9Q13.6 9.6 12.9 9.6H4.6Z" fill="none" stroke="#0b57d0" stroke-width="1.3" stroke-linejoin="round"/><path d="M4.2 7.6L7.3 4.5" stroke="#0b57d0" stroke-width="1.7" stroke-linecap="round"/><path d="M7.6 7.7H11" stroke="#0b57d0" stroke-width="1.1"/></svg>
<div class="a" style="left:233.6px;top:523.6px;width:14.8px;height:14.8px;border-radius:50%;background:#fdfdfd;box-shadow:0 0 1px rgba(0,0,0,0.25)"></div>
<svg class="a" style="left:236.40px;top:525.60px;width:9.30px;height:9.60px;" viewBox="0 0 9.3 9.6"><path d="M0.9 5.2A3.75 3.75 0 0 1 8.4 5.2V7M2.6 8.6V5.2A2.05 2.05 0 0 1 6.7 5.2V8.6M4.65 5V9.4" fill="none" stroke="#5f6368" stroke-width="0.95"/></svg>
<div class="a" style="left:980.30px;top:84.00px;width:5.40px;height:296.30px;background:#dadce0;border-radius:3px;"></div>
<svg class="a" style="left:1000.00px;top:48.70px;width:12.30px;height:12.00px;" viewBox="0 0 12.3 12"><rect x="0" y="0" width="12.3" height="12" rx="1.2" fill="#4285f4"/><rect x="2.2" y="2.2" width="7.9" height="7.6" fill="#fff"/><rect x="0" y="9.8" width="10.1" height="2.2" fill="#34a853"/><rect x="10.1" y="2.2" width="2.2" height="7.6" fill="#fbbc04"/><path d="M10.1 9.8H12.3L10.1 12Z" fill="#ea4335"/><text x="6.1" y="8.6" font-size="5.6" text-anchor="middle" fill="#4285f4" font-family="Liberation Sans" font-weight="bold">31</text></svg>
<svg class="a" style="left:999.50px;top:83.40px;width:13.00px;height:13.60px;" viewBox="0 0 13 13.6"><rect x="0" y="0" width="13" height="13.6" rx="1.5" fill="#f6c243"/><circle cx="6.5" cy="6" r="2.8" fill="#fff"/><rect x="5.1" y="8.8" width="2.8" height="1.8" fill="#fff"/></svg>
<svg class="a" style="left:1001.00px;top:120.50px;width:11.50px;height:11.50px;" viewBox="0 0 11.5 11.5"><path d="M9.6 3.2A4.6 4.6 0 1 0 10.4 5.2" fill="none" stroke="#0b57d0" stroke-width="1.6"/><path d="M3.6 5.8L5.4 7.5L10.6 1.8" fill="none" stroke="#0b57d0" stroke-width="1.6"/></svg>
<svg class="a" style="left:1001.50px;top:157.00px;width:9.50px;height:10.50px;" viewBox="0 0 9.5 10.5"><circle cx="4.75" cy="2.3" r="2.2" fill="#0b57d0"/><path d="M0.4 10.5V8.6Q0.4 5.6 4.75 5.6Q9.1 5.6 9.1 8.6V10.5Z" fill="#0b57d0"/></svg>
<svg class="a" style="left:1000.00px;top:190.80px;width:11.00px;height:13.60px;" viewBox="0 0 11 13.6"><path d="M5.5 13.6Q1 8 1 5A4.5 4.5 0 0 1 10 5Q10 8 5.5 13.6Z" fill="#34a853"/><path d="M1 5A4.5 4.5 0 0 1 5.5 0.5L5.5 5Z" fill="#1a73e8"/><path d="M5.5 0.5A4.5 4.5 0 0 1 10 5L5.5 5Z" fill="#ea4335"/><path d="M10 5Q10 8 5.5 13.6L5.5 5Z" fill="#fbbc04"/><circle cx="5.5" cy="5" r="1.6" fill="#fff"/></svg>
<div class="a" style="left:998.00px;top:226.00px;width:16.00px;height:1.00px;background:#e3e3e3;"></div>
<svg class="a" style="left:999.00px;top:247.50px;width:13.50px;height:13.50px;" viewBox="0 0 24 24" preserveAspectRatio="none"><path fill="#444746" d="M19 13h-6v6h-2v-6H5v-2h6V5h2v6h6v2z"/></svg>
<div class="a" style="left:940.30px;top:502.60px;width:34.80px;height:19.00px;background:#f7f7f7;border:1px solid #d0d0d0;border-radius:10px 10px 10px 4px;"></div>
<svg class="a" style="left:945.00px;top:505.00px;width:10.00px;height:14.00px;" viewBox="0 0 10 14"><circle cx="4.6" cy="4.8" r="4.6" fill="#15a07a"/><path d="M4.6 2L5.2 4.2L7.4 4.8L5.2 5.4L4.6 7.6L4 5.4L1.8 4.8L4 4.2Z" fill="#fff"/><rect x="2.6" y="10" width="4" height="1.2" fill="#15a07a"/><rect x="2.6" y="11.8" width="4" height="1.2" fill="#15a07a"/></svg>
<svg class="a" style="left:959.00px;top:505.00px;width:14.00px;height:14.00px;" viewBox="0 0 14 14"><path d="M7 0A7 7 0 0 1 7 14H0V7A7 7 0 0 1 7 0Z" fill="#027e6f"/><path d="M10.3 4.1A4.3 4.3 0 1 0 11.3 7.4" fill="none" stroke="#fff" stroke-width="1.5"/><rect x="7.2" y="6.7" width="4.1" height="1.4" fill="#fff"/></svg>
<svg class="a" style="left:999.00px;top:527.50px;width:13.00px;height:13.00px;" viewBox="0 0 24 24" preserveAspectRatio="none"><path fill="#444746" d="M10 6L8.59 7.41 13.17 12l-4.58 4.59L10 18l6-6z"/></svg>
<div id="ov"></div>
<div class="a" style="left:12.8px;top:503.1px;width:36px;height:36px;border-radius:50%;background:#3367d6;z-index:6;box-shadow:0 1px 4px rgba(0,0,0,0.25)"></div>
<svg class="a" style="left:23.30px;top:513.60px;width:15.00px;height:15.00px;z-index:7" viewBox="0 0 15 15"><line x1="7.5" y1="7.5" x2="14.50" y2="7.50" stroke="#fff" stroke-width="1.5" stroke-linecap="round"/><line x1="7.5" y1="7.5" x2="13.56" y2="11.00" stroke="#fff" stroke-width="1.5" stroke-linecap="round"/><line x1="7.5" y1="7.5" x2="11.00" y2="13.56" stroke="#fff" stroke-width="1.5" stroke-linecap="round"/><line x1="7.5" y1="7.5" x2="7.50" y2="14.50" stroke="#fff" stroke-width="1.5" stroke-linecap="round"/><line x1="7.5" y1="7.5" x2="4.00" y2="13.56" stroke="#fff" stroke-width="1.5" stroke-linecap="round"/><line x1="7.5" y1="7.5" x2="1.44" y2="11.00" stroke="#fff" stroke-width="1.5" stroke-linecap="round"/><line x1="7.5" y1="7.5" x2="0.50" y2="7.50" stroke="#fff" stroke-width="1.5" stroke-linecap="round"/><line x1="7.5" y1="7.5" x2="1.44" y2="4.00" stroke="#fff" stroke-width="1.5" stroke-linecap="round"/><line x1="7.5" y1="7.5" x2="4.00" y2="1.44" stroke="#fff" stroke-width="1.5" stroke-linecap="round"/><line x1="7.5" y1="7.5" x2="7.50" y2="0.50" stroke="#fff" stroke-width="1.5" stroke-linecap="round"/><line x1="7.5" y1="7.5" x2="11.00" y2="1.44" stroke="#fff" stroke-width="1.5" stroke-linecap="round"/><line x1="7.5" y1="7.5" x2="13.56" y2="4.00" stroke="#fff" stroke-width="1.5" stroke-linecap="round"/><circle cx="7.5" cy="7.5" r="2.7" fill="#fff"/><circle cx="7.5" cy="7.5" r="1.4" fill="#3367d6"/></svg>
<div class="a" style="left:385.4px;top:92.3px;width:253.4px;height:366.6px;background:#fff;border-radius:17px;z-index:8"></div>
<div style="position:absolute;left:0;top:0;z-index:9">
<div class="t" style="left:401.20px;top:108px;font-size:15px;line-height:20px;color:#1f1f1f;font-weight:normal;font-style:normal;letter-spacing:0.25px;">Page setup</div>
<div class="t" style="left:440.70px;top:143px;font-size:9.0px;line-height:20px;color:#0b57d0;font-weight:normal;font-style:normal;letter-spacing:0px;-webkit-text-stroke:0.4px #0b57d0;">Pages</div>
<div class="a" style="left:441.90px;top:167.20px;width:22.90px;height:2.20px;background:#1e5fd6;border-radius:2px 2px 0 0;"></div>
<div class="t" style="left:546.20px;top:143px;font-size:9.2px;line-height:20px;color:#1f1f1f;font-weight:normal;font-style:normal;letter-spacing:0px;-webkit-text-stroke:0.2px #1f1f1f;">Pageless</div>
<div class="a" style="left:400.90px;top:169.30px;width:222.60px;height:1.00px;background:#ececec;"></div>
<div class="t" style="left:400.90px;top:176px;font-size:9.7px;line-height:20px;color:#1f1f1f;font-weight:normal;font-style:normal;letter-spacing:0px;-webkit-text-stroke:0.15px #1f1f1f;">Apply to</div>
<div class="a" style="left:400.20px;top:197.50px;width:223.30px;height:25.80px;border:1px solid #c7c7c7;border-radius:4px;"></div>
<div class="t" style="left:410.90px;top:200px;font-size:11px;line-height:20px;color:#1f1f1f;font-weight:normal;font-style:normal;letter-spacing:-0.25px;">Whole document</div>
<svg class="a" style="left:600.50px;top:203.00px;width:14.40px;height:14.40px;" viewBox="0 0 24 24" preserveAspectRatio="none"><path fill="#1f1f1f" d="M7 10l5 5 5-5z"/></svg>
<div class="t" style="left:400.90px;top:230px;font-size:9.8px;line-height:20px;color:#1f1f1f;font-weight:normal;font-style:normal;letter-spacing:0px;-webkit-text-stroke:0.15px #1f1f1f;">Orientation</div>
<svg class="a" style="left:407.50px;top:258.60px;width:13.60px;height:13.60px;" viewBox="0 0 13.6 13.6"><circle cx="6.8" cy="6.8" r="5.7" fill="none" stroke="#2d62d8" stroke-width="1.15"/><circle cx="6.8" cy="6.8" r="2.9" fill="#2d62d8"/></svg>
<div class="t" style="left:433.70px;top:255px;font-size:9.6px;line-height:20px;color:#1f1f1f;font-weight:normal;font-style:normal;letter-spacing:0px;">Portrait</div>
<svg class="a" style="left:477.80px;top:258.60px;width:13.60px;height:13.60px;" viewBox="0 0 13.6 13.6"><circle cx="6.8" cy="6.8" r="5.7" fill="none" stroke="#444746" stroke-width="1.15"/></svg>
<div class="t" style="left:503.50px;top:255px;font-size:9.4px;line-height:20px;color:#1f1f1f;font-weight:normal;font-style:normal;letter-spacing:0px;">Landscape</div>
<div class="t" style="left:400.90px;top:286px;font-size:9.4px;line-height:20px;color:#1f1f1f;font-weight:normal;font-style:normal;letter-spacing:0px;-webkit-text-stroke:0.15px #1f1f1f;">Paper size</div>
<div class="t" style="left:571.20px;top:286px;font-size:9.4px;line-height:20px;color:#1f1f1f;font-weight:normal;font-style:normal;letter-spacing:0px;-webkit-text-stroke:0.15px #1f1f1f;">Page color</div>
<div class="a" style="left:400.90px;top:307.70px;width:159.80px;height:25.00px;border:2px solid #0b57d0;border-radius:3px;"></div>
<div class="t" style="left:410.90px;top:310px;font-size:10.6px;line-height:20px;color:#1f1f1f;font-weight:normal;font-style:normal;letter-spacing:-0.3px;">A4 (8.27" x 11.69")</div>
<svg class="a" style="left:538.20px;top:313.70px;width:14.40px;height:14.40px;" viewBox="0 0 24 24" preserveAspectRatio="none"><path fill="#0b57d0" d="M7 10l5 5 5-5z"/></svg>
<div class="a" style="left:571.20px;top:307.70px;width:51.60px;height:25.00px;border:1px solid #c7c7c7;border-radius:2px;"></div>
<svg class="a" style="left:580.80px;top:314.00px;width:12.80px;height:12.80px;" viewBox="0 0 12.8 12.8"><circle cx="6.4" cy="6.4" r="5.8" fill="#fff" stroke="#dadce0" stroke-width="0.9"/></svg>
<svg class="a" style="left:598.20px;top:313.70px;width:14.40px;height:14.40px;" viewBox="0 0 24 24" preserveAspectRatio="none"><path fill="#1f1f1f" d="M7 10l5 5 5-5z"/></svg>
<div class="t" style="left:400.90px;top:340px;font-size:9.6px;line-height:20px;color:#1f1f1f;font-weight:normal;font-style:normal;letter-spacing:0px;-webkit-text-stroke:0.15px #1f1f1f;">Margins (inches)</div>
<div class="t" style="left:400.90px;top:356px;font-size:8.3px;line-height:20px;color:#3c3f3e;font-weight:normal;font-style:normal;letter-spacing:0px;-webkit-text-stroke:0.25px #3c3f3e;">Top</div>
<div class="t" style="left:459.00px;top:356px;font-size:8.3px;line-height:20px;color:#3c3f3e;font-weight:normal;font-style:normal;letter-spacing:0px;-webkit-text-stroke:0.25px #3c3f3e;">Bottom</div>
<div class="t" style="left:517.30px;top:356px;font-size:8.3px;line-height:20px;color:#3c3f3e;font-weight:normal;font-style:normal;letter-spacing:0px;-webkit-text-stroke:0.25px #3c3f3e;">Left</div>
<div class="t" style="left:575.50px;top:356px;font-size:8.3px;line-height:20px;color:#3c3f3e;font-weight:normal;font-style:normal;letter-spacing:0px;-webkit-text-stroke:0.25px #3c3f3e;">Right</div>
<div class="a" style="left:400.20px;top:376.60px;width:48.70px;height:26.00px;border:1px solid #c7c7c7;border-radius:3px;"></div>
<div class="t" style="left:410.70px;top:380px;font-size:10.2px;line-height:20px;color:#1f1f1f;font-weight:normal;font-style:normal;letter-spacing:0px;">1</div>
<div class="a" style="left:459.00px;top:376.60px;width:47.80px;height:26.00px;border:1px solid #c7c7c7;border-radius:3px;"></div>
<div class="t" style="left:469.50px;top:380px;font-size:10.2px;line-height:20px;color:#1f1f1f;font-weight:normal;font-style:normal;letter-spacing:0px;">1</div>
<div class="a" style="left:516.90px;top:376.60px;width:48.00px;height:26.00px;border:1px solid #c7c7c7;border-radius:3px;"></div>
<div class="t" style="left:527.40px;top:380px;font-size:10.2px;line-height:20px;color:#1f1f1f;font-weight:normal;font-style:normal;letter-spacing:0px;">1</div>
<div class="a" style="left:575.00px;top:376.60px;width:48.50px;height:26.00px;border:1px solid #c7c7c7;border-radius:3px;"></div>
<div class="t" style="left:585.50px;top:380px;font-size:10.2px;line-height:20px;color:#1f1f1f;font-weight:normal;font-style:normal;letter-spacing:0px;">1</div>
<div class="t" style="left:408.60px;top:421px;font-size:9.4px;line-height:20px;color:#0b57d0;font-weight:normal;font-style:normal;letter-spacing:0px;-webkit-text-stroke:0.35px #0b57d0;">Set as default</div>
<div class="t" style="left:538.00px;top:421px;font-size:9.3px;line-height:20px;color:#0b57d0;font-weight:normal;font-style:normal;letter-spacing:0px;-webkit-text-stroke:0.35px #0b57d0;">Cancel</div>
<div class="a" style="left:580.10px;top:417.60px;width:42.90px;height:25.80px;background:#1f58d0;border-radius:13px;"></div>
<div class="t" style="left:595.40px;top:421px;font-size:8.9px;line-height:20px;color:#ffffff;font-weight:normal;font-style:normal;letter-spacing:0px;-webkit-text-stroke:0.35px #ffffff;">OK</div>
</div>
</body></html>
